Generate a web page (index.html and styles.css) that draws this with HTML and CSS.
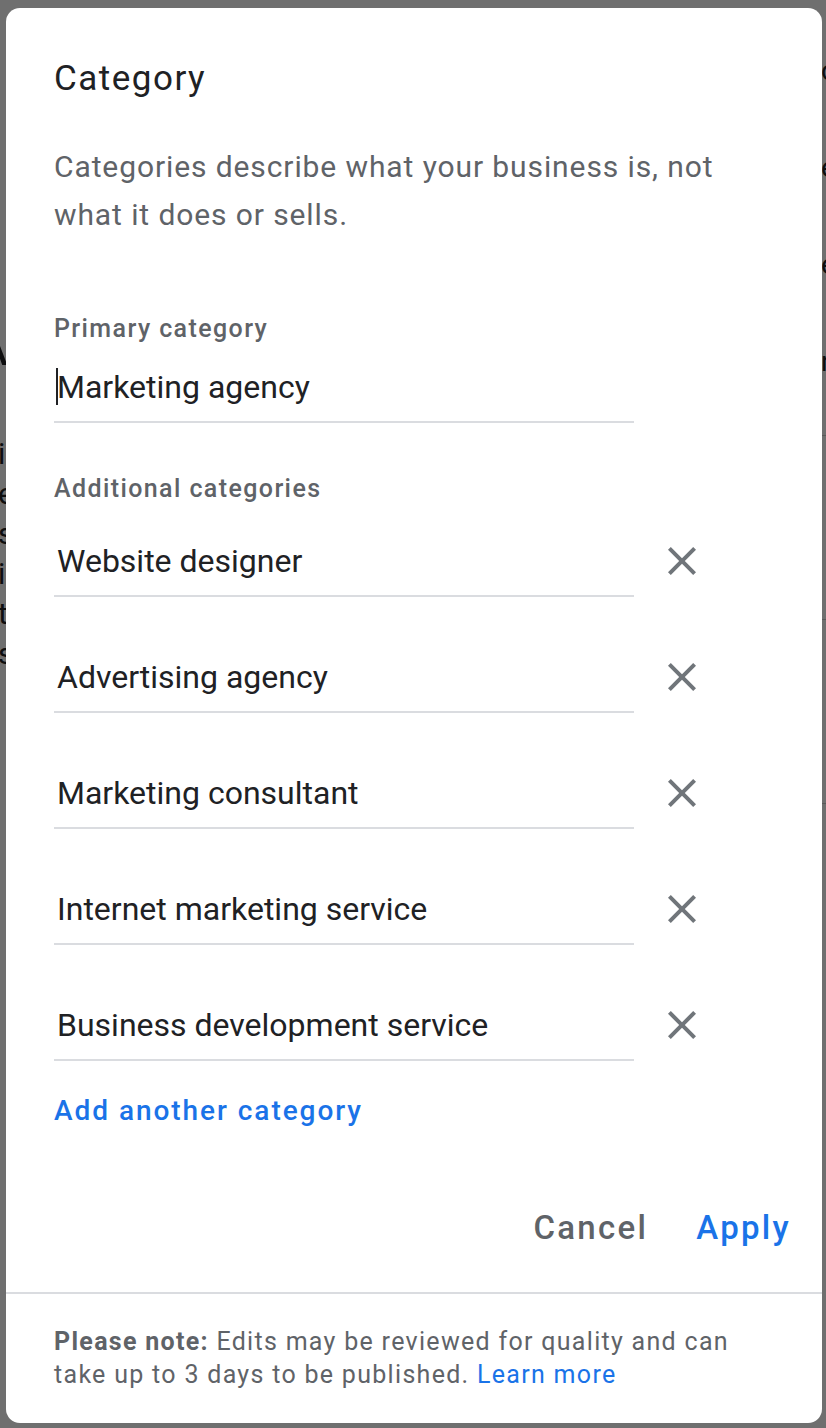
FILE: index.html
```html
<!DOCTYPE html>
<html lang="en">
<head>
    <meta charset="UTF-8">
    <meta name="viewport" content="width=device-width, initial-scale=1.0">
    <title>Category</title>
    <link rel="stylesheet" href="styles.css">
</head>
<body>
    <!-- page behind the dialog, only its edges show -->
    <div class="page" aria-hidden="true">
        <div class="page-left">
            <div class="page-heading">A</div>
            <div class="page-lines">
                <div>i</div>
                <div>e</div>
                <div>s</div>
                <div>i</div>
                <div>t</div>
                <div>s</div>
            </div>
        </div>
        <div class="page-right">
            <div>o</div>
            <div>e</div>
            <div>e</div>
            <div>n</div>
            <div class="page-rule first-rule"></div>
            <div class="page-rule"></div>
            <div class="page-rule"></div>
        </div>
    </div>

    <div class="scrim"></div>

    <div class="dialog" role="dialog" aria-labelledby="dialogTitle">
        <div class="dialog-body">
            <h1 id="dialogTitle" class="dialog-title">Category</h1>
            <p class="dialog-desc">Categories describe what your business is, not what it does or sells.</p>

            <div class="field-label primary-label">Primary category</div>
            <div class="field primary-field"><span class="caret"></span>Marketing agency</div>

            <div class="field-label additional-label">Additional categories</div>
            <div class="category-list">
                <div class="category-row">
                    <div class="field">Website designer</div>
                    <button class="remove-btn" aria-label="Remove">
                        <svg viewBox="5 5 14 14" width="28" height="28"><path d="M19 6.41L17.59 5 12 10.59 6.41 5 5 6.41 10.59 12 5 17.59 6.41 19 12 13.41 17.59 19 19 17.59 13.41 12z"/></svg>
                    </button>
                </div>
                <div class="category-row">
                    <div class="field">Advertising agency</div>
                    <button class="remove-btn" aria-label="Remove">
                        <svg viewBox="5 5 14 14" width="28" height="28"><path d="M19 6.41L17.59 5 12 10.59 6.41 5 5 6.41 10.59 12 5 17.59 6.41 19 12 13.41 17.59 19 19 17.59 13.41 12z"/></svg>
                    </button>
                </div>
                <div class="category-row">
                    <div class="field">Marketing consultant</div>
                    <button class="remove-btn" aria-label="Remove">
                        <svg viewBox="5 5 14 14" width="28" height="28"><path d="M19 6.41L17.59 5 12 10.59 6.41 5 5 6.41 10.59 12 5 17.59 6.41 19 12 13.41 17.59 19 19 17.59 13.41 12z"/></svg>
                    </button>
                </div>
                <div class="category-row">
                    <div class="field">Internet marketing service</div>
                    <button class="remove-btn" aria-label="Remove">
                        <svg viewBox="5 5 14 14" width="28" height="28"><path d="M19 6.41L17.59 5 12 10.59 6.41 5 5 6.41 10.59 12 5 17.59 6.41 19 12 13.41 17.59 19 19 17.59 13.41 12z"/></svg>
                    </button>
                </div>
                <div class="category-row">
                    <div class="field">Business development service</div>
                    <button class="remove-btn" aria-label="Remove">
                        <svg viewBox="5 5 14 14" width="28" height="28"><path d="M19 6.41L17.59 5 12 10.59 6.41 5 5 6.41 10.59 12 5 17.59 6.41 19 12 13.41 17.59 19 19 17.59 13.41 12z"/></svg>
                    </button>
                </div>
            </div>

            <a href="#" class="add-link">Add another category</a>

            <div class="dialog-actions">
                <button class="btn-text btn-cancel">Cancel</button>
                <button class="btn-text btn-apply">Apply</button>
            </div>
        </div>

        <div class="dialog-note">
            <b>Please note:</b> Edits may be reviewed for quality and can take up to 3 days to be published. <a href="#">Learn more</a>
        </div>
    </div>
</body>
</html>
```

FILE: styles.css
```css
:root {
    --text: #202124;
    --muted: #5f6368;
    --blue: #1a73e8;
    --line: #dadce0;
    --icon: #70757a;
}

body {
    margin: 0;
    width: 826px;
    height: 1428px;
    overflow: hidden;
    position: relative;
    background: #fff;
    font-family: Roboto, "Liberation Sans", sans-serif;
    color: var(--text);
}

/* background page */
.page {
    display: flex;
    justify-content: space-between;
    height: 100%;
}

.page-left {
    width: 6px;
    overflow: hidden;
    padding-top: 318px;
    font-size: 30px;
}

.page-heading {
    font-size: 52px;
    line-height: 60px;
    margin-left: -26px;
}

.page-lines {
    margin-top: 56px;
    margin-left: -2px;
    line-height: 40px;
}

.page-right {
    width: 5px;
    overflow: hidden;
    padding-top: 22px;
    font-size: 28px;
    line-height: 97px;
}

.page-rule {
    width: 5px;
    height: 183px;
    border-top: 1px solid #ccc;
}

.first-rule {
    margin-top: 25px;
}

.scrim {
    position: absolute;
    inset: 0;
    background: rgba(0, 0, 0, 0.565);
}

/* dialog */
.dialog {
    position: absolute;
    left: 6px;
    top: 8px;
    width: 816px;
    background: #fff;
    border-radius: 14px;
    overflow: hidden;
}

.dialog-body {
    padding: 49px 33px 0 48px;
}

.dialog-title {
    margin: 0;
    font-size: 35px;
    font-weight: 400;
    line-height: 44px;
    letter-spacing: 1.5px;
    color: var(--text);
}

.dialog-desc {
    margin: 42px 0 0;
    max-width: 700px;
    font-size: 30px;
    line-height: 48px;
    letter-spacing: 0.9px;
    color: var(--muted);
}

.field-label {
    font-size: 25px;
    font-weight: 500;
    line-height: 32px;
    letter-spacing: 1.4px;
    color: var(--muted);
}

.primary-label {
    margin-top: 74px;
}

.additional-label {
    margin-top: 50px;
}

.field {
    width: 577px;
    padding: 0 0 14px 3px;
    border-bottom: 2px solid var(--line);
    font-size: 32px;
    line-height: 40px;
    color: var(--text);
    white-space: nowrap;
}

.primary-field {
    margin-top: 22px;
}

.caret {
    display: inline-block;
    width: 2px;
    height: 37px;
    margin: 0 -1px 0 -1px;
    vertical-align: -7px;
    background: var(--text);
}

.category-list {
    margin-top: 36px;
    display: flex;
    flex-direction: column;
    gap: 60px;
}

.category-row {
    display: flex;
    align-items: flex-start;
    gap: 24px;
}

.remove-btn {
    width: 48px;
    height: 40px;
    padding: 0;
    border: none;
    background: none;
    display: flex;
    align-items: center;
    justify-content: center;
    fill: var(--icon);
    cursor: pointer;
}

.add-link {
    display: block;
    width: max-content;
    margin-top: 32px;
    font-size: 28px;
    font-weight: 500;
    line-height: 36px;
    letter-spacing: 1.95px;
    color: var(--blue);
    text-decoration: none;
}

.dialog-actions {
    display: flex;
    justify-content: flex-end;
    gap: 48px;
    margin-top: 79px;
}

.btn-text {
    padding: 0;
    border: none;
    background: none;
    font-family: inherit;
    font-size: 33px;
    font-weight: 500;
    line-height: 40px;
    letter-spacing: 2.3px;
    cursor: pointer;
}

.btn-cancel {
    color: var(--muted);
}

.btn-apply {
    color: var(--blue);
    margin-right: -2px;
}

.dialog-note {
    margin-top: 44px;
    padding: 31px 40px 32px 48px;
    border-top: 2px solid var(--line);
    font-size: 25px;
    line-height: 33px;
    letter-spacing: 1.3px;
    color: var(--muted);
}

.dialog-note b {
    font-weight: 700;
}

.dialog-note a {
    color: var(--blue);
    text-decoration: none;
}
```
